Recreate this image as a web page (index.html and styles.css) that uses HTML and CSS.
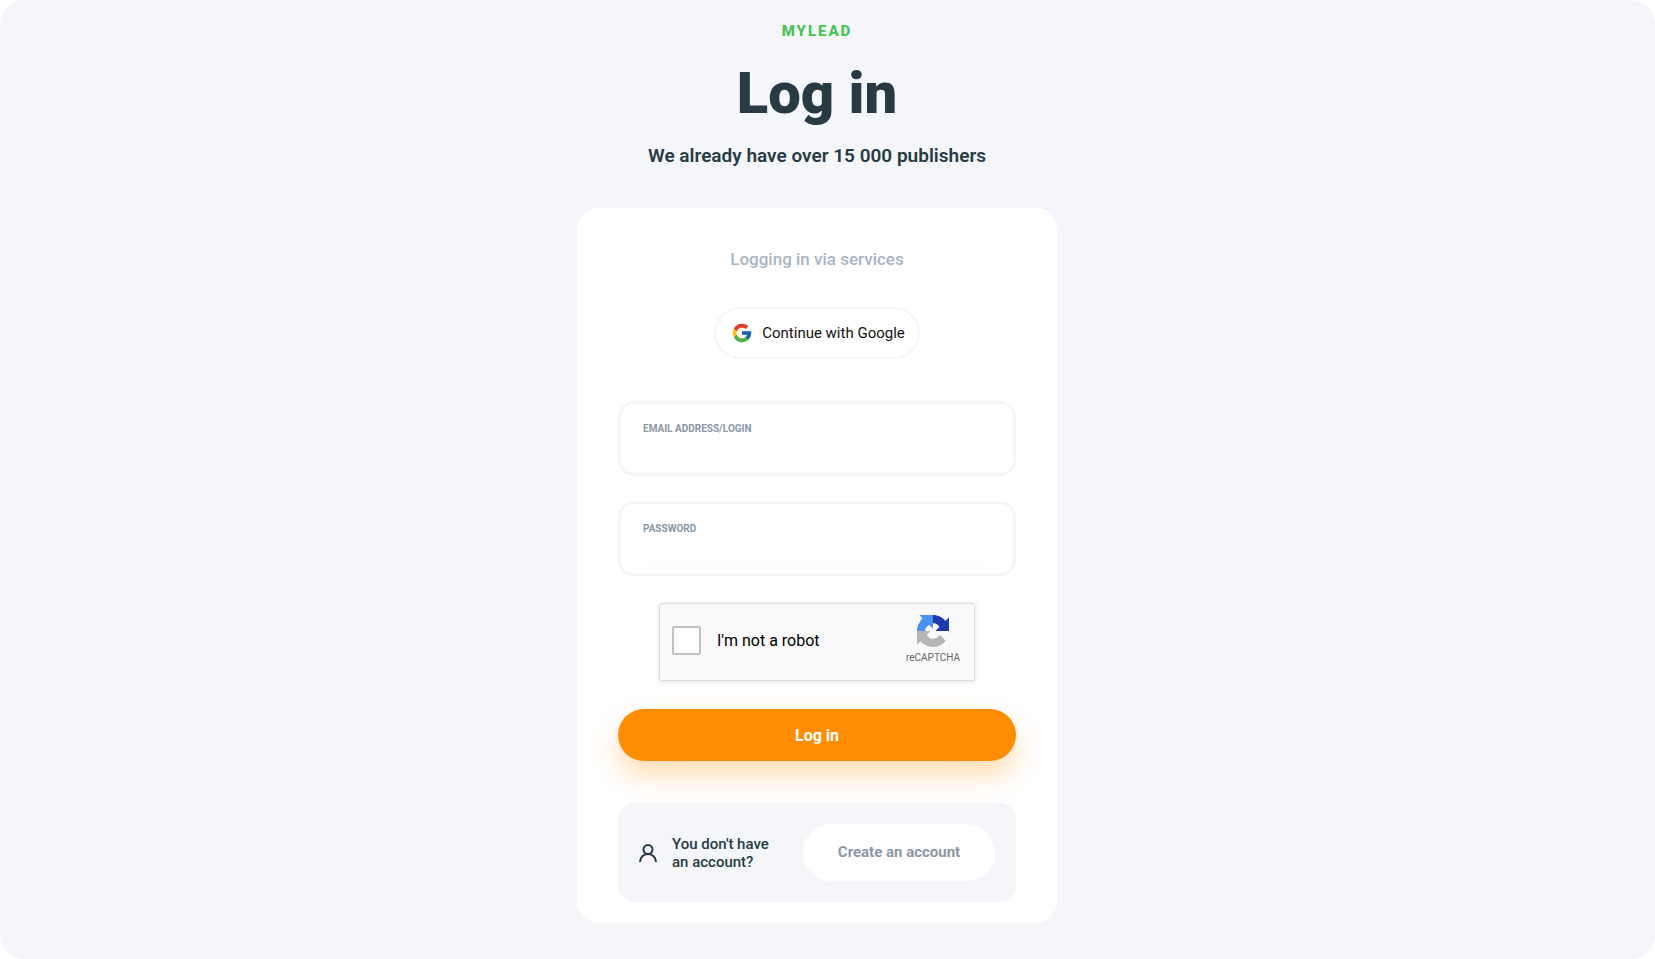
FILE: index.html
```html
<!DOCTYPE html>
<html lang="en">
<head>
  <meta charset="UTF-8">
  <meta name="viewport" content="width=device-width, initial-scale=1.0">
  <title>Log in - MyLead</title>
  <link rel="stylesheet" href="styles.css">
</head>
<body>
  <main class="page">
    <header class="intro">
      <p class="brand">MYLEAD</p>
      <h1>Log in</h1>
      <p class="subtitle">We already have over 15 000 publishers</p>
    </header>

    <section class="card">
      <h2>Logging in via services</h2>
      <button type="button" class="google-btn">
        <svg width="22" height="22" viewBox="0 0 48 48" aria-hidden="true">
          <path fill="#FFC107" d="M43.6 20H24v8h11.300C33.700 32.700 29.200 36 24 36c-6.600 0-12-5.400-12-12s5.400-12 12-12c3.100 0 5.800 1.200 8 3l5.700-5.700C34 6 29.300 4 24 4 13 4 4 13 4 24s9 20 20 20 20-9 20-20c0-1.300-.1-2.700-.4-4z"/>
          <path fill="#E53935" d="M6.300 14.700l6.600 4.800C14.700 15.100 19 12 24 12c3.100 0 5.800 1.200 8 3l5.700-5.700C34 6 29.300 4 24 4 16.300 4 9.700 8.300 6.300 14.700z"/>
          <path fill="#4CAF50" d="M24 44c5.200 0 9.900-2 13.400-5.200l-6.200-5.200C29.200 35.100 26.700 36 24 36c-5.200 0-9.600-3.300-11.300-8l-6.500 5C9.500 39.600 16.200 44 24 44z"/>
          <path fill="#1565C0" d="M43.600 20H24v8h11.300c-.8 2.200-2.200 4.200-4.100 5.600l6.200 5.200C37 39.200 44 34 44 24c0-1.300-.1-2.700-.4-4z"/>
        </svg>
        Continue with Google
      </button>

      <!-- Login Form -->
      <form id="loginForm">
        <div class="form-group">
          <label for="login">EMAIL ADDRESS/LOGIN</label>
          <input type="text" id="login" name="login" required>
        </div>
        <div class="form-group">
          <label for="password">PASSWORD</label>
          <input type="password" id="password" name="password" class="underlined" required>
        </div>

        <div class="captcha">
          <input type="checkbox" id="robot" name="robot">
          <label for="robot">I'm not a robot</label>
          <div class="captcha-logo">
            <svg width="32" height="32" viewBox="0 0 64 64" aria-hidden="true">
              <path fill="#1c3aa9" d="M64 31.955l-.033-1.370V4.687l-7.160 7.160C50.948 4.674 42.033.093 32.050.093c-10.400 0-19.622 4.960-25.458 12.640l11.736 11.860a15.550 15.550 0 0 1 4.754-5.334c2.050-1.600 4.952-2.906 8.968-2.906.485 0 .860.057 1.135.163 4.976.393 9.288 3.140 11.828 7.124l-8.307 8.307L64 31.953z"/>
              <path fill="#4a90f5" d="M31.862.094l-1.370.033H4.594l7.160 7.160C4.580 13.147 0 22.060 0 32.046c0 10.400 4.960 19.622 12.640 25.458L24.500 45.768a15.550 15.550 0 0 1-5.334-4.754c-1.600-2.050-2.906-4.952-2.906-8.968 0-.485.057-.860.163-1.135.393-4.976 3.140-9.288 7.124-11.828l8.307 8.307L31.860.095z"/>
              <path fill="#b5b5b5" d="M0 32.045l.033 1.370v25.898l7.160-7.160c5.860 7.173 14.774 11.754 24.760 11.754 10.400 0 19.622-4.960 25.458-12.640l-11.736-11.860a15.550 15.550 0 0 1-4.754 5.334c-2.050 1.600-4.952 2.906-8.968 2.906-.485 0-.860-.057-1.135-.163-4.976-.393-9.288-3.140-11.828-7.124l8.307-8.307c-10.522.040-22.400.066-27.295-.005z"/>
            </svg>
            <span>reCAPTCHA</span>
          </div>
        </div>

        <button type="submit" class="submit-btn">Log in</button>
      </form>

      <div class="signup">
        <svg width="18" height="18" viewBox="0 0 18 18" fill="none" stroke="#283b42" stroke-width="2" aria-hidden="true">
          <circle cx="9" cy="5.500" r="4.500"/>
          <path d="M1 18c0-4.600 3.600-8 8-8s8 3.400 8 8"/>
        </svg>
        <p>You don't have an account?</p>
        <a href="#register" class="create-btn">Create an account</a>
      </div>
    </section>
  </main>
</body>
</html>
```

FILE: styles.css
```css
* {
  box-sizing: border-box;
}
body {
  margin: 0;
  background-color: #fff;
  color: #283b42;
  font-family: Roboto, "Liberation Sans", sans-serif;
}
h1, h2, p {
  margin: 0;
}
button, input {
  font-family: inherit;
}
.page {
  display: flex;
  flex-direction: column;
  align-items: center;
  min-height: 100vh;
  padding: 20px 21px 36px 0;
  border-radius: 24px;
  background-color: #f4f6fa;
}
.intro {
  text-align: center;
}
.brand {
  color: #46c252;
  font-size: 15px;
  font-weight: 800;
  letter-spacing: 2px;
  line-height: 22px;
}
h1 {
  margin-top: 16px;
  font-size: 58px;
  font-weight: 900;
  line-height: 70px;
}
.subtitle {
  margin-top: 16px;
  font-size: 19px;
  font-weight: 600;
  line-height: 24px;
}

.card {
  display: flex;
  flex-direction: column;
  align-items: center;
  width: 100%;
  max-width: 480px;
  margin-top: 40px;
  padding: 41px 41px 21px;
  border-radius: 22px;
  background-color: #fff;
}
h2 {
  color: #a9b5c1;
  font-size: 17px;
  font-weight: 500;
  line-height: 20px;
}
.google-btn {
  display: flex;
  align-items: center;
  gap: 9px;
  height: 52px;
  margin-top: 38px;
  padding: 0 13px 0 15px;
  border: 2px solid #f4f6fa;
  border-radius: 26px;
  background-color: #fff;
  color: #111;
  font-size: 15px;
  cursor: pointer;
}

form {
  width: 100%;
  margin-top: 42px;
}
.form-group {
  height: 75px;
  margin-bottom: 25px;
  padding: 17px 22px 6px;
  border: 3px solid #f4f6fa;
  border-radius: 16px;
}
.form-group label {
  display: block;
  color: #8b97a3;
  font-size: 10px;
  font-weight: 700;
  line-height: 16px;
}
.form-group input {
  display: block;
  width: 100%;
  height: 28px;
  padding: 0;
  border: none;
  background: transparent;
  font-size: 15px;
  outline: none;
}
.form-group .underlined {
  border-bottom: 1px solid #fafafc;
}

.captcha {
  display: flex;
  align-items: center;
  width: 100%;
  max-width: 316px;
  height: 78px;
  margin: 27px auto 0;
  padding: 0 14px 4px 12px;
  border: 1px solid #dcdcdc;
  border-radius: 3px;
  background-color: #f9f9f9;
  box-shadow: 0 1px 4px 1px rgba(0, 0, 0, 0.08);
}
.captcha input {
  appearance: none;
  width: 29px;
  height: 29px;
  margin: 0 16px 0 0;
  border: 2px solid #c1c1c1;
  border-radius: 2px;
  background-color: #fff;
}
.captcha label {
  flex: 1;
  color: #000;
  font-size: 16px;
}
.captcha-logo {
  display: flex;
  flex-direction: column;
  align-items: center;
  gap: 4px;
  color: #666;
  font-size: 10px;
  line-height: 14px;
}

.submit-btn {
  display: block;
  width: 100%;
  height: 52px;
  margin-top: 28px;
  border: none;
  border-radius: 26px;
  background-color: #ff8d04;
  box-shadow: 0 14px 28px rgba(255, 141, 4, 0.3);
  color: #fff;
  font-size: 16px;
  font-weight: 700;
  cursor: pointer;
}

.signup {
  display: flex;
  align-items: center;
  width: 100%;
  margin-top: 42px;
  padding: 21px;
  border-radius: 16px;
  background-color: #f4f6fa;
}
.signup p {
  width: 108px;
  margin-left: 15px;
  font-size: 15px;
  font-weight: 500;
  line-height: 18px;
}
.create-btn {
  width: 192px;
  margin-left: auto;
  border-radius: 29px;
  background-color: #fff;
  color: #8b97a3;
  font-size: 15px;
  font-weight: 700;
  line-height: 57px;
  text-align: center;
  text-decoration: none;
}
```
